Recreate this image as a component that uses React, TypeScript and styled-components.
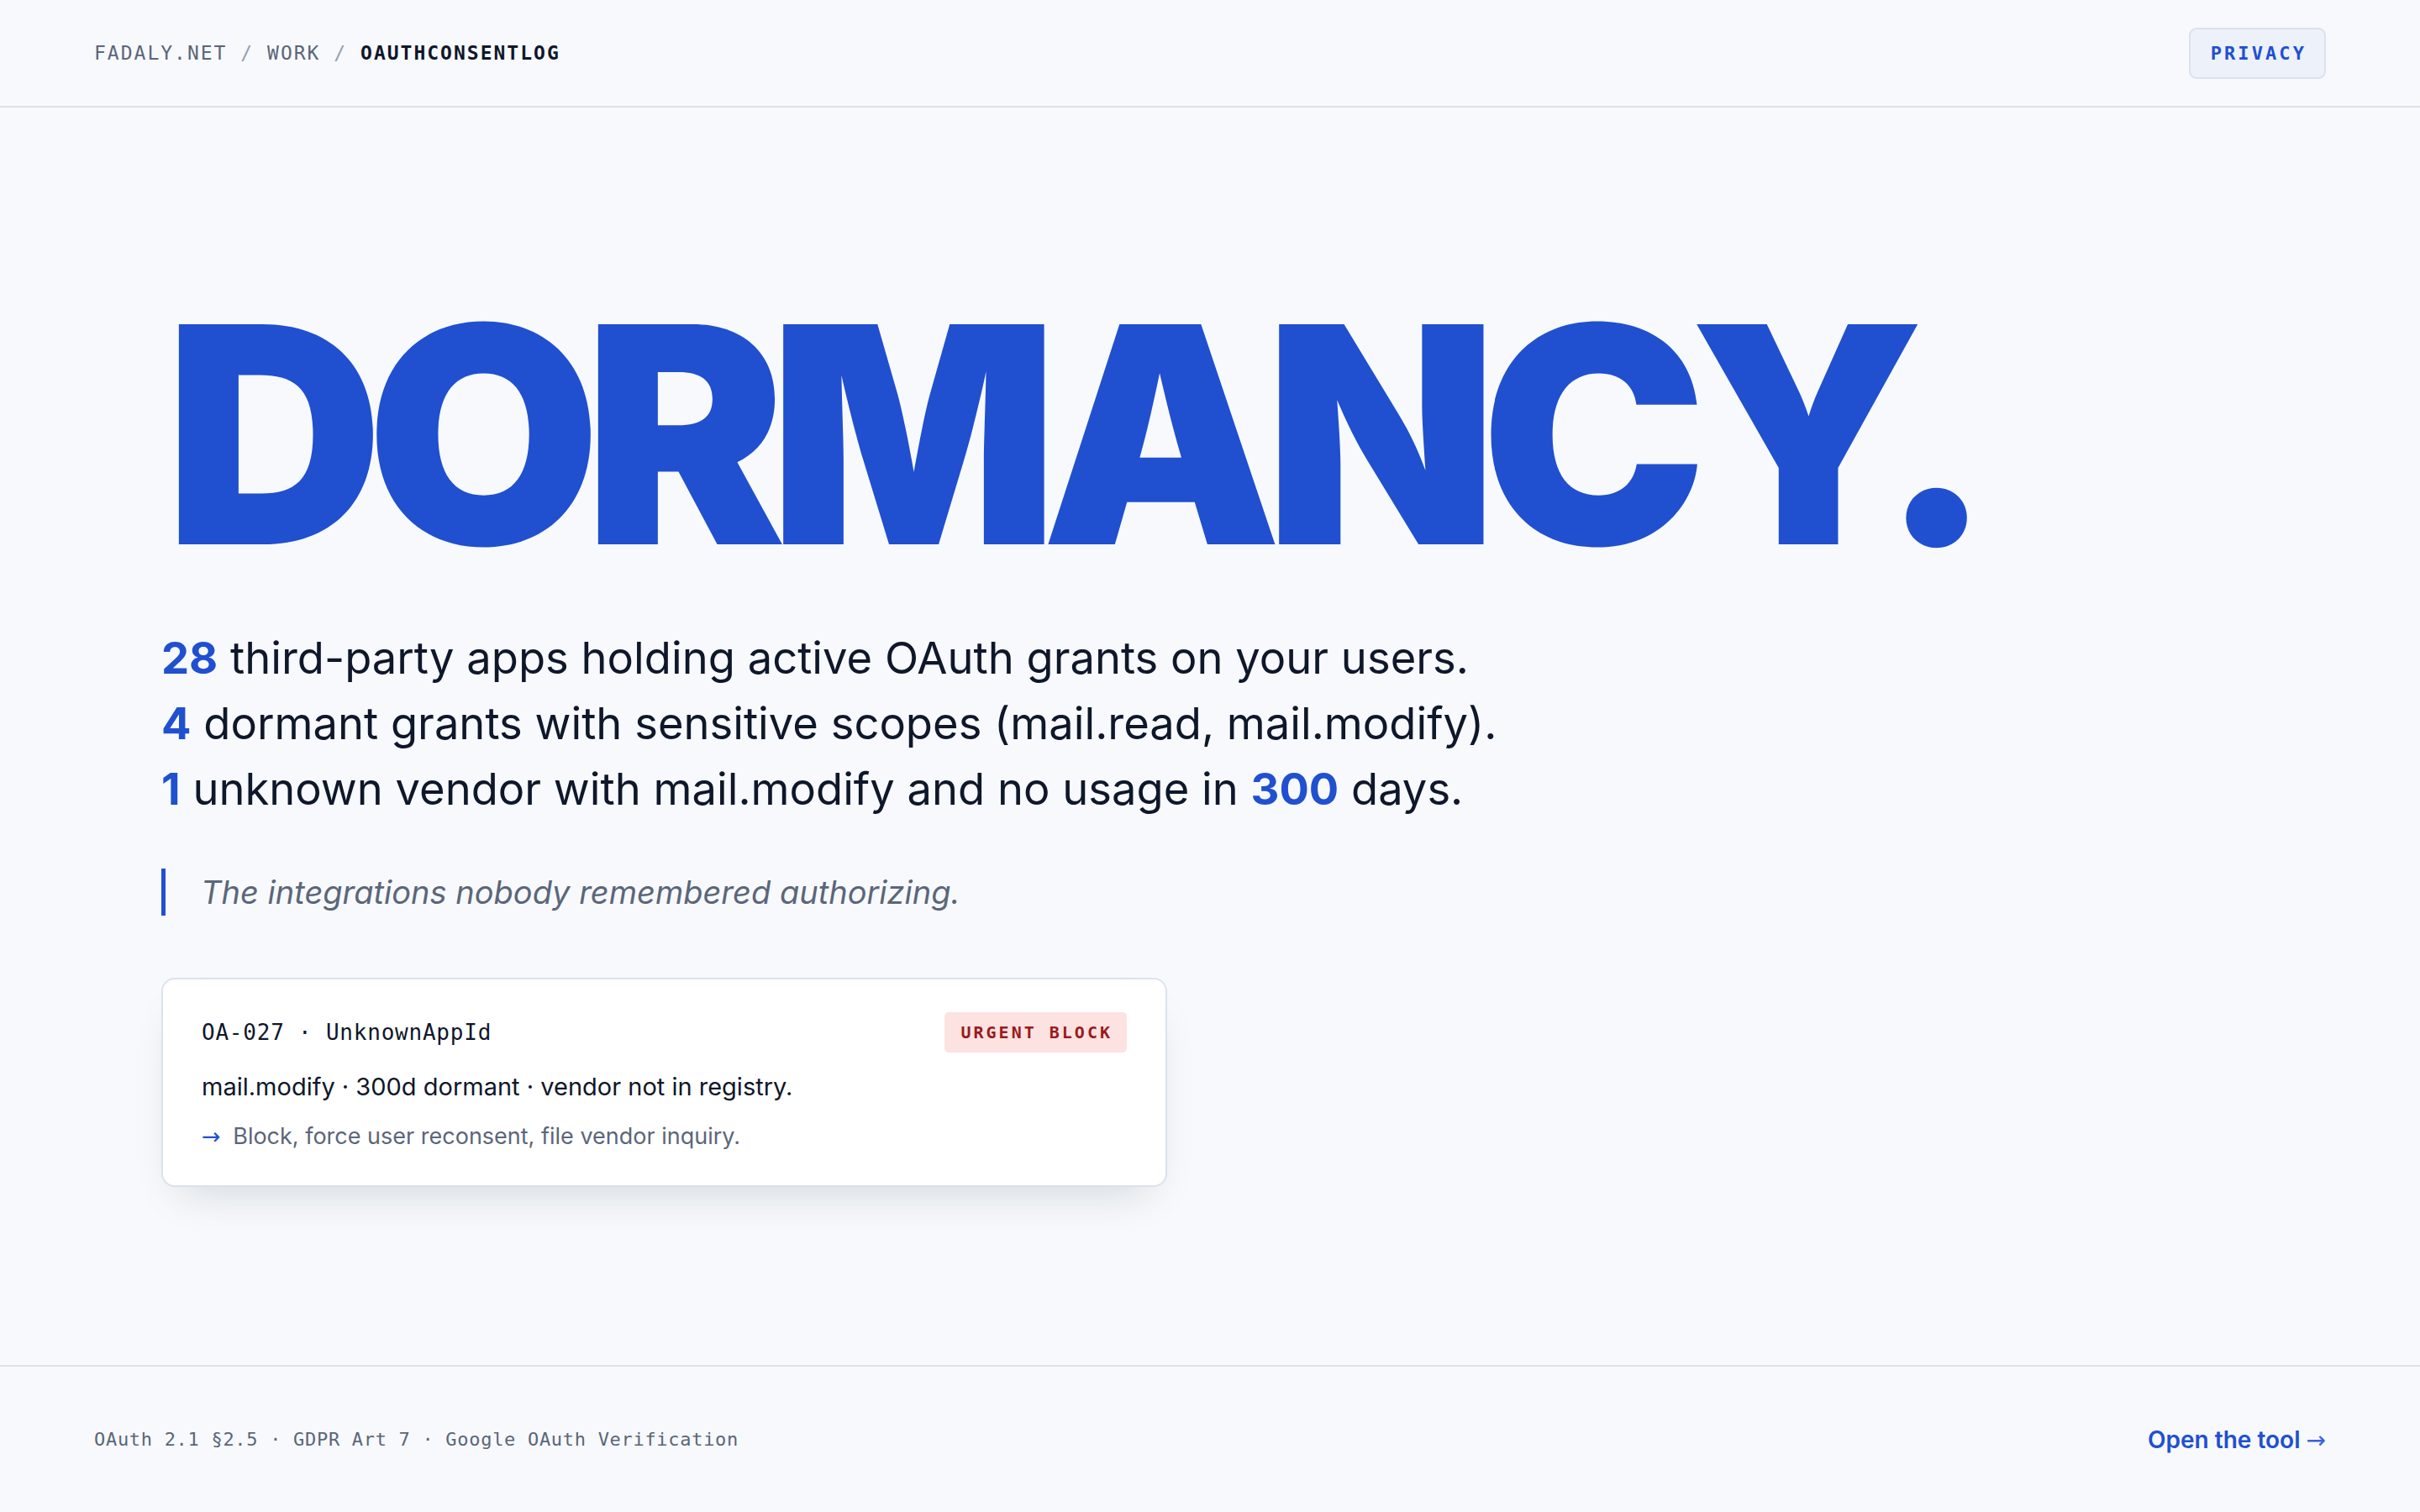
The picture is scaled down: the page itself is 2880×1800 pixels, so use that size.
import styled, { createGlobalStyle } from 'styled-components';

const blue = '#2050d0';
const ink = '#0f172a';
const slate = '#5b6679';
const line = '#dbe2ec';
const mono = '"DejaVu Sans Mono", "Liberation Mono", monospace';

const GlobalStyle = createGlobalStyle`
  html, body {
    margin: 0;
    padding: 0;
    background: #f7f9fc;
    font-family: Inter, "Noto Sans", sans-serif;
    color: ${ink};
  }
  * { box-sizing: border-box; }
`;

const Page = styled.div`
  min-height: 100vh;
  display: flex;
  flex-direction: column;
`;

const Header = styled.header`
  height: 128px;
  padding: 0 112px;
  border-bottom: 2px solid ${line};
  display: flex;
  align-items: center;
  justify-content: space-between;
`;

const Crumbs = styled.nav`
  font-family: ${mono};
  font-size: 23px;
  letter-spacing: 2px;
  color: ${slate};
  white-space: pre;
`;

const Crumb = styled.span<{ current?: boolean }>`
  color: ${({ current }) => (current ? ink : slate)};
  font-weight: ${({ current }) => (current ? 600 : 400)};
`;

const Slash = styled.span`
  color: #94a0b4;
`;

const PrivacyButton = styled.a`
  height: 61px;
  padding: 0 21px 0 24px;
  display: flex;
  align-items: center;
  border: 2px solid ${line};
  border-radius: 9px;
  background: #edf1f9;
  color: ${blue};
  font-family: ${mono};
  font-size: 22px;
  font-weight: 700;
  letter-spacing: 0.14em;
  text-decoration: none;
`;

const Main = styled.main`
  flex: 1;
  padding: 227px 192px 0;
`;

const Headline = styled.h1`
  margin: 0 0 0 4px;
  font-size: 360px;
  font-weight: 900;
  line-height: 0.9;
  letter-spacing: -0.056em;
  color: ${blue};
`;

const Stats = styled.p`
  margin: 65px 0 0;
  font-size: 52.5px;
  line-height: 78px;
  color: ${ink};
`;

const Num = styled.strong`
  color: ${blue};
  font-weight: 700;
`;

const Quote = styled.blockquote`
  margin: 56px 0 0;
  padding-left: 42px;
  border-left: 5px solid ${blue};
  font-size: 38px;
  line-height: 56px;
  font-style: italic;
  color: ${slate};
`;

const Card = styled.section`
  margin-top: 74px;
  width: 1197px;
  padding: 39px 46px;
  background: #fff;
  border: 2px solid ${line};
  border-radius: 16px;
  box-shadow: 0 26px 50px -22px rgba(15, 23, 42, 0.16);
`;

const CardTop = styled.div`
  display: flex;
  align-items: center;
  justify-content: space-between;
  height: 48px;
`;

const CardId = styled.div`
  font-family: ${mono};
  font-size: 26px;
  font-weight: 500;
  letter-spacing: 0.03em;
  white-space: pre;
`;

const Badge = styled.span`
  height: 48px;
  padding: 0 17px 0 20px;
  display: flex;
  align-items: center;
  border-radius: 5px;
  background: #fde2e2;
  color: #991b1b;
  font-family: ${mono};
  font-size: 20px;
  font-weight: 700;
  letter-spacing: 0.15em;
`;

const CardLine = styled.p`
  margin: 20px 0 0;
  font-size: 29px;
  line-height: 42px;
`;

const CardAction = styled.p`
  margin: 18px 0 0;
  font-size: 27px;
  line-height: 39px;
  color: ${slate};
`;

const Arrow = styled.span`
  font-family: "DejaVu Sans", sans-serif;
  margin-right: 7px;
  color: ${blue};
`;

const Footer = styled.footer`
  height: 175px;
  padding: 0 112px;
  border-top: 2px solid ${line};
  display: flex;
  align-items: center;
  justify-content: space-between;
`;

const Refs = styled.div`
  font-family: ${mono};
  font-size: 22px;
  letter-spacing: 0.7px;
  color: ${slate};
  white-space: pre;
`;

const ToolLink = styled.a`
  font-size: 28px;
  font-weight: 600;
  color: ${blue};
  text-decoration: none;
`;

const LinkArrow = styled.span`
  font-family: "DejaVu Sans", sans-serif;
  font-weight: 400;
  color: #3b63d6;
`;

export default function App() {
  return (
    <Page>
      <GlobalStyle />
      <Header>
        <Crumbs>
          <Crumb>FADALY.NET</Crumb> <Slash>/</Slash> <Crumb>WORK</Crumb> <Slash>/</Slash>{' '}
          <Crumb current>OAUTHCONSENTLOG</Crumb>
        </Crumbs>
        <PrivacyButton href="#">PRIVACY</PrivacyButton>
      </Header>

      <Main>
        <Headline>DORMANCY.</Headline>
        <Stats>
          <Num>28</Num> third-party apps holding active OAuth grants on your users.
          <br />
          <Num>4</Num> dormant grants with sensitive scopes (mail.read, mail.modify).
          <br />
          <Num>1</Num> unknown vendor with mail.modify and no usage in <Num>300</Num> days.
        </Stats>
        <Quote>The integrations nobody remembered authorizing.</Quote>
        <Card>
          <CardTop>
            <CardId>OA-027 · UnknownAppId</CardId>
            <Badge>URGENT BLOCK</Badge>
          </CardTop>
          <CardLine>mail.modify · 300d dormant · vendor not in registry.</CardLine>
          <CardAction>
            <Arrow>→</Arrow> Block, force user reconsent, file vendor inquiry.
          </CardAction>
        </Card>
      </Main>

      <Footer>
        <Refs>OAuth 2.1 §2.5 · GDPR Art 7 · Google OAuth Verification</Refs>
        <ToolLink href="#">
          Open the tool <LinkArrow>→</LinkArrow>
        </ToolLink>
      </Footer>
    </Page>
  );
}
